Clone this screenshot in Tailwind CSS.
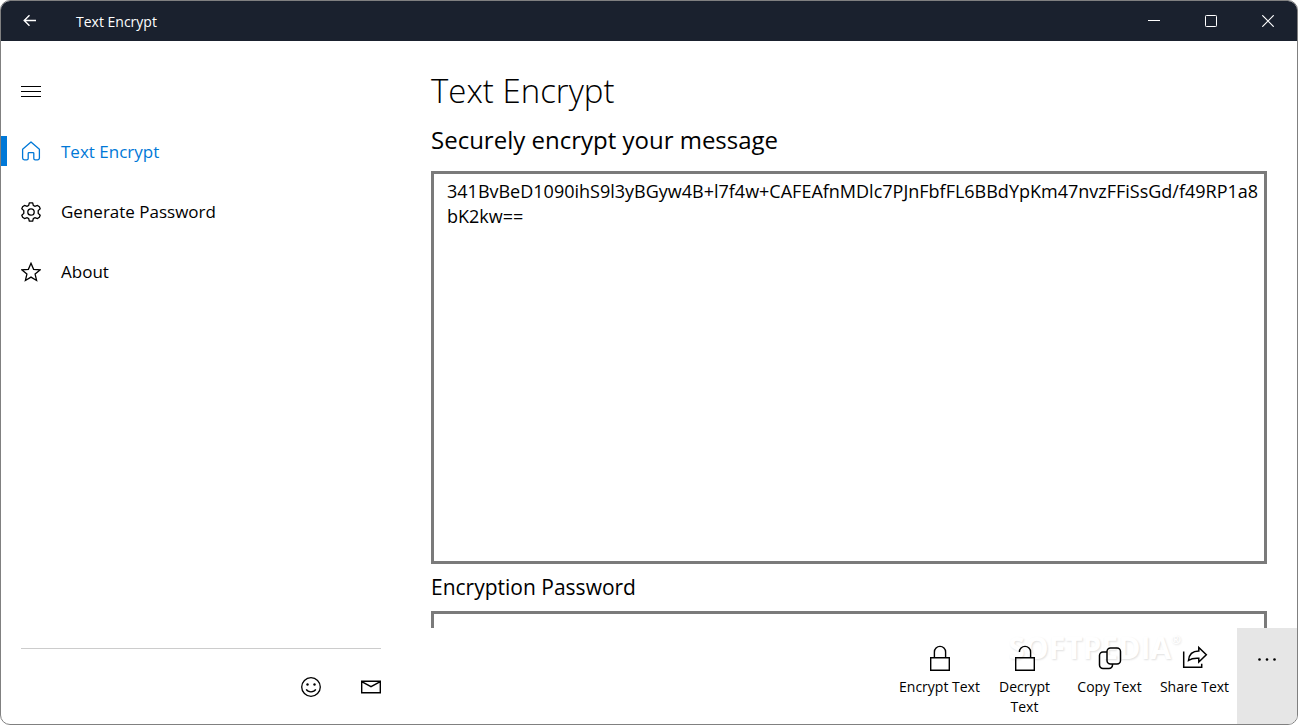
<!DOCTYPE html>
<html lang="en">
<head>
  <meta charset="UTF-8" />
  <meta name="viewport" content="width=device-width, initial-scale=1.0" />
  <title>Text Encrypt</title>
  <script src="https://cdn.jsdelivr.net/npm/@tailwindcss/browser@4"></script>
</head>
<body class="bg-white text-black font-['Open_Sans',sans-serif]">
  <div class="h-screen flex flex-col overflow-hidden rounded-[10px] border border-[#808080]">

    <!-- Title bar -->
    <header class="flex h-10 shrink-0 items-center bg-[#1a212e] pr-px text-white">
      <button type="button" aria-label="Back" class="flex h-10 w-[58px] items-center justify-center">
        <svg width="14" height="14" viewBox="0 0 14 14" fill="none" stroke="currentColor" stroke-width="1.4"><path d="M13 6.5H1.5M6.5 1.2L1.2 6.5l5.3 5.3" /></svg>
      </button>
      <span class="ml-[17px] pt-px text-sm">Text Encrypt</span>
      <div class="ml-auto flex">
        <button type="button" aria-label="Minimize" class="flex h-10 w-[57px] items-center justify-center">
          <svg width="12" height="12" viewBox="0 0 12 12" stroke="currentColor"><path d="M0 5.5h12" /></svg>
        </button>
        <button type="button" aria-label="Maximize" class="flex h-10 w-[57px] items-center justify-center">
          <svg width="12" height="12" viewBox="0 0 12 12" fill="none" stroke="currentColor"><rect x="0.5" y="0.5" width="11" height="11" rx="0.8" /></svg>
        </button>
        <button type="button" aria-label="Close" class="flex h-10 w-[57px] items-center justify-center">
          <svg width="12" height="12" viewBox="0 0 12 12" stroke="currentColor" stroke-width="1.2"><path d="M0.3 0.3l11.4 11.4M11.7 0.3L0.3 11.7" /></svg>
        </button>
      </div>
    </header>

    <div class="flex min-h-0 flex-1">
      <!-- Navigation pane -->
      <aside class="flex w-[400px] shrink-0 flex-col pt-5">
        <button type="button" aria-label="Menu" class="flex h-[60px] w-[60px] items-center justify-center">
          <svg width="20" height="11" viewBox="0 0 20 11" stroke="currentColor"><path d="M0 0.5h20M0 5.5h20M0 10.5h20" /></svg>
        </button>
        <nav class="flex flex-col text-[17px]">
          <a href="#" class="relative flex h-[60px] items-center pt-0.5 text-[#0078d7]">
            <span class="absolute top-[15px] left-0 h-[30px] w-1.5 bg-[#0078d7]"></span>
            <span class="flex w-[60px] justify-center">
              <svg width="20" height="22" viewBox="0 0 20 22" fill="none" stroke="currentColor" stroke-width="1.3" stroke-linejoin="round"><path d="M1.6 8.2L10 1l8.400 7.200V17a1.800 1.800 0 0 1-1.800 1.800h-2.400a1.400 1.400 0 0 1-1.400-1.400v-5a.8.8 0 0 0-.8-.8H8a.8.8 0 0 0-.8.8v5a1.400 1.400 0 0 1-1.400 1.400H3.400A1.800 1.800 0 0 1 1.600 17z" /></svg>
            </span>
            Text Encrypt
          </a>
          <a href="#" class="flex h-[60px] items-center pt-0.5">
            <span class="flex w-[60px] justify-center">
              <svg width="20" height="20" viewBox="0 0 20 20" fill="none" stroke="currentColor" stroke-width="1.3" stroke-linejoin="round"><path d="M8.300 0.800h3.400l.6 2.600 1.500.9 2.700-.9 1.900 1.400.8 1.900-2 1.900v2.800l2 1.900-.8 1.900-1.900 1.400-2.700-.9-1.500.9-.6 2.600H8.300l-.6-2.600-1.500-.9-2.700.9-1.900-1.400-.8-1.900 2-1.900V8.600l-2-1.900.8-1.900 1.900-1.400 2.700.9 1.500-.9z" /><circle cx="10" cy="10" r="3.200" /></svg>
            </span>
            Generate Password
          </a>
          <a href="#" class="flex h-[60px] items-center pt-0.5">
            <span class="flex w-[60px] justify-center">
              <svg width="20" height="20" viewBox="0 0 20 20" fill="none" stroke="currentColor" stroke-width="1.3"><path d="M10 1.300l2.600 6 6.400.6-4.900 4.200 1.500 6.400L10 15.100l-5.600 3.400 1.500-6.400L1 7.900l6.400-.6z" /></svg>
            </span>
            About
          </a>
        </nav>
        <div class="mx-5 mt-auto flex h-[76px] items-center justify-end border-t border-[#ccc]">
          <button type="button" aria-label="Feedback" class="flex w-[60px] justify-center">
            <svg width="20" height="20" viewBox="0 0 20 20" fill="none" stroke="currentColor" stroke-width="1.3"><circle cx="10" cy="10" r="9.300" /><path d="M5.200 12.300c2 3.300 7.600 3.300 9.600 0" /><circle cx="6.500" cy="7.500" r="1.200" fill="currentColor" stroke="none" /><circle cx="13.500" cy="7.500" r="1.200" fill="currentColor" stroke="none" /></svg>
          </button>
          <button type="button" aria-label="Mail" class="-mr-5 flex w-[60px] justify-center">
            <svg width="20" height="14" viewBox="0 0 20 14" fill="none" stroke="currentColor" stroke-width="1.4"><path d="M0.700 1.200h18.600v11.600H0.700zM0.700 1.600l9.300 5 9.300-5" /></svg>
          </button>
        </div>
      </aside>

      <main class="flex min-w-0 flex-1 flex-col">
        <div class="min-h-0 flex-1 overflow-hidden px-[30px] pt-[27px]">
          <h1 class="text-[33px] leading-[46px] font-light">Text Encrypt</h1>
          <h2 class="mt-2 text-2xl leading-9"><label for="message">Securely encrypt your message</label></h2>
          <textarea id="message" spellcheck="false" class="mt-[13px] block h-[393px] w-full resize-none break-all border-3 border-[#7a7a7a] py-[5px] pr-1 pl-[13px] text-lg leading-[25px] outline-none">341BvBeD1090ihS9l3yBGyw4B+l7f4w+CAFEAfnMDlc7PJnFbfFL6BBdYpKm47nvzFFiSsGd/f49RP1a8bK2kw==</textarea>
          <label for="password" class="mt-2 block text-[21px] leading-[30px]">Encryption Password</label>
          <input id="password" type="password" class="mt-[9px] block h-10 w-full border-3 border-[#7a7a7a] px-[13px] outline-none" />
        </div>

        <!-- Command bar -->
        <div class="relative flex h-24 shrink-0 justify-end text-sm leading-5">
          <div aria-hidden="true" class="absolute top-1 right-[116px] flex text-[30px] leading-8 font-bold text-white [text-shadow:1px_1px_2px_#e0e0e0]">SOFTPEDIA<span class="text-xs leading-4">®</span></div>
          <button type="button" class="relative flex w-[85px] flex-col items-center pt-4">
            <svg width="20" height="28" viewBox="0 0 20 28" fill="none" stroke="currentColor" stroke-width="1.4"><path d="M0.700 13.700h18.600v12.600H0.700zM4.400 13.700V8a5.600 5.600 0 0 1 11.200 0v5.700" /></svg>
            <span class="mt-[5px]">Encrypt Text</span>
          </button>
          <button type="button" class="relative flex w-[85px] flex-col items-center px-3 pt-4">
            <svg width="20" height="28" viewBox="0 0 20 28" fill="none" stroke="currentColor" stroke-width="1.4"><path d="M0.700 13.700h18.600v12.600H0.700zM4.400 8a5.600 5.600 0 0 1 11.200 0v5.700" /></svg>
            <span class="mt-[5px]">Decrypt Text</span>
          </button>
          <button type="button" class="relative flex w-[85px] flex-col items-center pt-4">
            <svg width="24" height="28" viewBox="0 0 24 28" fill="none" stroke="currentColor" stroke-width="1.500"><rect x="9" y="4" width="13.500" height="16" rx="3.500" /><path d="M9 8H5a3.500 3.500 0 0 0-3.500 3.500V21A3.500 3.500 0 0 0 5 24.500h6a3.500 3.500 0 0 0 3.500-3.500v-1" /></svg>
            <span class="mt-[5px]">Copy Text</span>
          </button>
          <button type="button" class="relative flex w-[85px] flex-col items-center pt-4">
            <svg width="26" height="28" viewBox="0 0 26 28" fill="none" stroke="currentColor" stroke-width="1.500"><path d="M1.700 7.500v15.800h18v-3.500M6.500 16.500c.5-6.500 4.500-9.500 10.300-9.500V3.500l7.500 7.300-7.500 7.200v-3.700c-4.500-.3-7.500.2-10.300 2.200z" /></svg>
            <span class="mt-[5px]">Share Text</span>
          </button>
          <button type="button" aria-label="More" class="flex w-[60px] justify-center bg-[#e6e6e6] pt-[30px]">
            <svg width="18" height="3" viewBox="0 0 18 3" fill="currentColor"><circle cx="1.500" cy="1.500" r="1.300" /><circle cx="9" cy="1.500" r="1.300" /><circle cx="16.500" cy="1.500" r="1.300" /></svg>
          </button>
        </div>
      </main>
    </div>
  </div>
</body>
</html>
